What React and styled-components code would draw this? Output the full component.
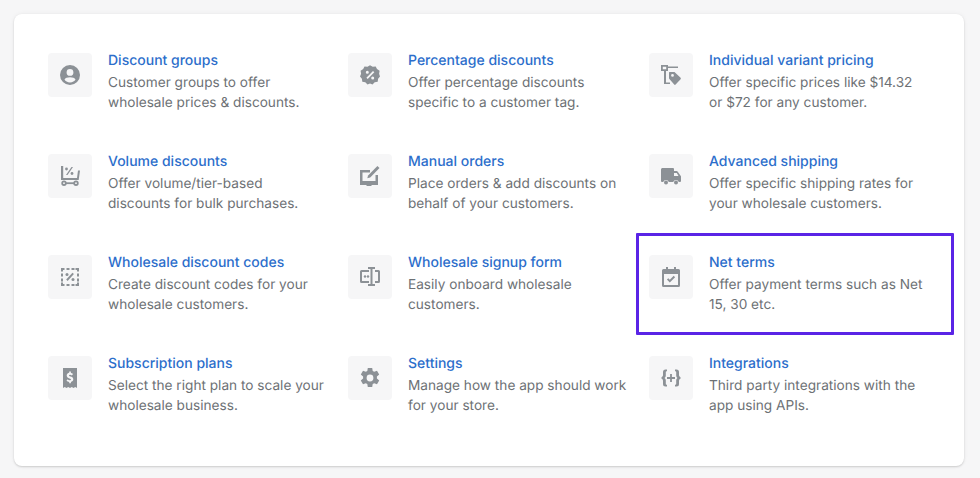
import React from "react";
import styled, { createGlobalStyle } from "styled-components";

const GlobalStyle = createGlobalStyle`
  html, body {
    margin: 0;
    padding: 0;
    background: #f6f6f7;
    font-family: "Inter", "Liberation Sans", sans-serif;
    -webkit-font-smoothing: antialiased;
    text-rendering: geometricPrecision;
  }
`;

const Page = styled.div`
  width: 980px;
  height: 478px;
  padding: 14px 16px 12px 14px;
  box-sizing: border-box;
`;

const Card = styled.div`
  height: 452px;
  box-sizing: border-box;
  padding: 19px 0 0 34px;
  background: #fff;
  border-radius: 8px;
  box-shadow: 0 0 5px rgba(23, 24, 24, 0.05), 0 1px 2px rgba(0, 0, 0, 0.15);
`;

const Grid = styled.div`
  display: grid;
  grid-template-columns: 300px 301px 290px;
  grid-auto-rows: 101px;
`;

const Item = styled.div`
  position: relative;
  display: flex;
  gap: 16px;
  padding-top: 18px;
  box-sizing: border-box;

  ${(p) =>
    p.$highlighted &&
    `
    &::after {
      content: "";
      position: absolute;
      left: -13px;
      top: -2px;
      width: 318px;
      height: 102px;
      box-sizing: border-box;
      border: 3px solid #5a24e6;
      border-radius: 1px;
    }
  `}
`;

const IconTile = styled.div`
  flex: none;
  display: flex;
  align-items: center;
  justify-content: center;
  width: 44px;
  height: 44px;
  margin-top: 2px;
  background: #f6f6f7;
  border-radius: 4px;
  color: #8c9196;

  svg {
    display: block;
    width: 20px;
    height: 20px;
  }
`;

const Body = styled.div`
  min-width: 0;
  max-width: 219px;
`;

const Title = styled.a`
  display: block;
  font-size: 14px;
  line-height: 20px;
  font-weight: 500;
  color: #2c6ecb;
`;

const Description = styled.p`
  margin: 2px 0 0;
  font-size: 13.65px;
  line-height: 20px;
  color: #6d7175;
`;

const Icon = ({ children }) => (
  <svg viewBox="0 0 20 20" fill="currentColor" aria-hidden="true">
    {children}
  </svg>
);

const icons = {
  customer: (
    <Icon>
      <path
        fillRule="evenodd"
        d="M10 0a10 10 0 1 0 0 20 10 10 0 0 0 0-20zm0 4a3.4 3.4 0 1 1 0 6.8A3.4 3.4 0 0 1 10 4zm0 13.4c-2.5 0-4.6-1.1-5.5-2.9.6-1.5 3-2.3 5.5-2.3s4.9.8 5.5 2.3c-.9 1.8-3 2.9-5.5 2.9z"
      />
    </Icon>
  ),
  percentBadge: (
    <Icon>
      <path
        fillRule="evenodd"
        d="M10 .2l2.700 1.500 3-.2 1.300 2.600 2.600 1.600-.5 3L20 11.500l-1.900 2.300-.4 3-3 .5-2.200 2.100-2.500-.8-2.500.8-2.200-2.100-3-.5-.4-3L0 11.500l1.100-2.800-.5-3 2.600-1.600 1.300-2.600 3 .2L10 .2zM13 6l-6.600 6.800 1.300 1.200 6.600-6.700L13 6zM7.300 5.800a1.500 1.500 0 1 0 0 3 1.500 1.500 0 0 0 0-3zm5.400 5.600a1.500 1.500 0 1 0 0 3 1.500 1.500 0 0 0 0-3z"
      />
    </Icon>
  ),
  variantTag: (
    <Icon>
      <path
        fillRule="evenodd"
        d="M0 0h7v1.500h10V3H7v3H5v11.500h4V19H3V6H0V0zm1.800 1.800v2.400h3.400V1.800H1.800z"
      />
      <path
        fillRule="evenodd"
        d="M8.500 7H13c.4 0 .7.100 1 .4l5.600 5.400c.4.400.4 1 0 1.400l-5 5.400c-.4.400-1 .4-1.400 0L8.400 14c-.3-.3-.4-.6-.4-1V7.500c0-.3.200-.5.500-.5zm3 2a1.400 1.400 0 1 0 0 2.800 1.400 1.400 0 0 0 0-2.800z"
      />
    </Icon>
  ),
  cart: (
    <Icon>
      <path d="M1 0h2.200v12H17l1-7.500h2L18.700 14H1V0z" />
      <path d="M11.500 1H13L7.500 9H6l5.500-8z" />
      <circle cx="6.500" cy="3" r="1.400" />
      <circle cx="12" cy="7.500" r="1.400" />
      <path
        fillRule="evenodd"
        d="M4 14.500a2.700 2.700 0 1 1 0 5.400 2.700 2.700 0 0 1 0-5.400zm0 1.800a.9.900 0 1 0 0 1.800.9.900 0 0 0 0-1.800zM16 14.500a2.700 2.700 0 1 1 0 5.400 2.700 2.700 0 0 1 0-5.400zm0 1.800a.9.900 0 1 0 0 1.800.9.900 0 0 0 0-1.800z"
      />
      <path d="M6 16.300h8v1.800H6z" />
    </Icon>
  ),
  compose: (
    <Icon>
      <path d="M0 4h10v2.500H2.500V15h13V9H18v10h-6l-1 1H7l-1-1H0V4z" />
      <path d="M17.400 0l2.100 2.100L10.200 11.500l-2.900.8.800-2.900L17.400 0z" />
    </Icon>
  ),
  truck: (
    <Icon>
      <path
        fillRule="evenodd"
        d="M1.500 2H12a1 1 0 0 1 1 1v2h2.600c.4 0 .8.200 1 .6L19.800 10c.1.200.2.400.2.600V15a1 1 0 0 1-1 1h-1.200a3 3 0 0 0-5.600 0H7.800a3 3 0 0 0-5.600 0H1a1 1 0 0 1-1-1V3.500C0 2.700.7 2 1.500 2zM13 7v3h4.500l-1.700-3H13z"
      />
      <circle cx="5" cy="16.500" r="2" />
      <circle cx="15" cy="16.500" r="2" />
    </Icon>
  ),
  discountCode: (
    <Icon>
      <path d="M1 1h3.500v2H3v1.500H1V1zm5.500 0h3v2h-3zm5 0h3v2h-3zM15.500 1H19v3.500h-2V3h-1.500V1zM1 6.500h2v3H1zm16 0h2v3h-2zM1 11.500h2v3H1zm16 0h2v3h-2zM1 15.500h2V17h1.500v2H1v-3.500zm16 0h2V19h-3.500v-2H17v-1.500zM6.500 17h3v2h-3zm5 0h3v2h-3z" />
      <path d="M12.500 5.800l1.400 1.300-6.300 6.800-1.400-1.300 6.300-6.800z" />
      <circle cx="7" cy="7.500" r="1.500" />
      <circle cx="13" cy="12.500" r="1.500" />
    </Icon>
  ),
  signupForm: (
    <Icon>
      <path d="M0 4.500A1.500 1.500 0 0 1 1.500 3H9v2H2v9h7v2H1.500A1.500 1.500 0 0 1 0 14.500v-10z" />
      <path d="M15 3h3.500A1.500 1.500 0 0 1 20 4.500v10a1.500 1.500 0 0 1-1.500 1.500H15v-2h3V5h-3V3z" />
      <path d="M8 0h7v2h-2.500v15H15v2H8v-2h2.500V2H8V0z" />
      <circle cx="5" cy="9.500" r="1.200" />
      <circle cx="8" cy="9.500" r="1.200" />
    </Icon>
  ),
  calendar: (
    <Icon>
      <path
        fillRule="evenodd"
        d="M5 0h2v2h6V0h2v2h2.500A1.500 1.500 0 0 1 19 3.500v15a1.500 1.500 0 0 1-1.500 1.500h-15A1.500 1.500 0 0 1 1 18.500v-15A1.500 1.500 0 0 1 2.500 2H5V0zM3 7v11h14V7H3z"
      />
      <path d="M8.800 15.500l-2.900-2.900 1.400-1.400 1.500 1.500 3.900-3.900 1.400 1.400-5.300 5.300z" />
    </Icon>
  ),
  receipt: (
    <Icon>
      <path
        fillRule="evenodd"
        d="M3 0h14v20l-1.750-1-1.750 1-1.750-1L10 20l-1.750-1-1.750 1-1.750-1L3 20V0zm6.200 3.500v1.300c-1.500.3-2.500 1.400-2.500 2.800 0 1.700 1.300 2.400 2.800 2.800 1 .3 1.500.5 1.500 1 0 .5-.5.800-1.300.8-.8 0-1.500-.3-2.100-.9l-1.100 1.400c.7.700 1.600 1.100 2.700 1.200v1.300h1.700v-1.300c1.500-.3 2.400-1.300 2.400-2.700 0-1.800-1.400-2.400-2.900-2.800-1-.3-1.400-.5-1.400-1 0-.4.400-.7 1.100-.7.700 0 1.300.2 1.800.7l1.100-1.400c-.6-.6-1.300-1-2.100-1.100V3.500H9.200z"
      />
    </Icon>
  ),
  gear: (
    <Icon>
      <path
        fillRule="evenodd"
        d="M7.800 0h4.400l.5 2.900 1.500.9 2.800-1 2.200 3.800-2.300 1.900v2l2.300 1.900-2.200 3.800-2.800-1-1.500.9-.5 2.900H7.800l-.5-2.900-1.500-.9-2.800 1L.8 12.400l2.300-1.900v-2L.8 6.600 3 2.800l2.800 1 1.500-.9L7.800 0zM10 6.600a3.400 3.400 0 1 0 0 6.800 3.400 3.400 0 0 0 0-6.800z"
      />
    </Icon>
  ),
  braces: (
    <Icon>
      <path d="M4.500 1.500H6v1.800h-.5c-.4 0-.7.300-.7.700v3.600c0 1-.5 1.900-1.300 2.400.8.500 1.300 1.400 1.300 2.400V16c0 .4.300.7.700.7H6v1.800H4.500A2.500 2.500 0 0 1 2 16v-3.100c0-1-.5-1.900-1.500-2.100V9.200C1.500 9 2 8.100 2 7.100V4a2.500 2.500 0 0 1 2.500-2.500z" />
      <path d="M15.500 1.500H14v1.800h.5c.4 0 .7.300.7.700v3.600c0 1 .5 1.900 1.300 2.400-.8.500-1.300 1.400-1.300 2.400V16c0 .4-.3.700-.7.700H14v1.800h1.500A2.500 2.500 0 0 0 18 16v-3.100c0-1 .5-1.900 1.500-2.100V9.200C18.500 9 18 8.100 18 7.100V4a2.500 2.500 0 0 0-2.500-2.500z" />
      <path d="M9.100 6h1.800v3.100H14v1.800h-3.100V14H9.100v-3.100H6V9.100h3.100V6z" />
    </Icon>
  ),
};

const features = [
  { icon: "customer", title: "Discount groups", text: "Customer groups to offer wholesale prices & discounts." },
  { icon: "percentBadge", title: "Percentage discounts", text: "Offer percentage discounts specific to a customer tag." },
  { icon: "variantTag", title: "Individual variant pricing", text: "Offer specific prices like $14.32 or $72 for any customer." },
  { icon: "cart", title: "Volume discounts", text: "Offer volume/tier-based discounts for bulk purchases." },
  { icon: "compose", title: "Manual orders", text: "Place orders & add discounts on behalf of your customers." },
  { icon: "truck", title: "Advanced shipping", text: "Offer specific shipping rates for your wholesale customers." },
  { icon: "discountCode", title: "Wholesale discount codes", text: "Create discount codes for your wholesale customers." },
  { icon: "signupForm", title: "Wholesale signup form", text: "Easily onboard wholesale customers." },
  { icon: "calendar", title: "Net terms", text: "Offer payment terms such as Net 15, 30 etc.", highlighted: true },
  { icon: "receipt", title: "Subscription plans", text: "Select the right plan to scale your wholesale business." },
  { icon: "gear", title: "Settings", text: "Manage how the app should work for your store." },
  { icon: "braces", title: "Integrations", text: "Third party integrations with the app using APIs." },
];

const App = () => (
  <Page>
    <GlobalStyle />
    <Card>
      <Grid>
        {features.map((f) => (
          <Item key={f.title} $highlighted={f.highlighted}>
            <IconTile>{icons[f.icon]}</IconTile>
            <Body>
              <Title>{f.title}</Title>
              <Description>{f.text}</Description>
            </Body>
          </Item>
        ))}
      </Grid>
    </Card>
  </Page>
);

export default App;
